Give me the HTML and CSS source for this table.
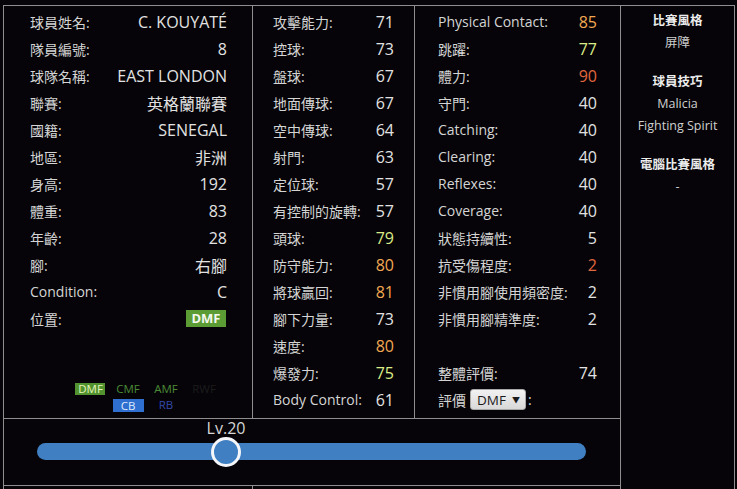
FILE: index.html
```html
<!DOCTYPE html>
<html lang="zh-Hant">
<head>
<meta charset="utf-8">
<link rel="stylesheet" href="styles.css">
</head>
<body>
<div class="sheet">
  <div class="cell info">
    <div class="row"><span class="k">球員姓名:</span><span class="v">C. KOUYATÉ</span></div>
    <div class="row"><span class="k">隊員編號:</span><span class="v">8</span></div>
    <div class="row"><span class="k">球隊名稱:</span><span class="v">EAST LONDON</span></div>
    <div class="row"><span class="k">聯賽:</span><span class="v">英格蘭聯賽</span></div>
    <div class="row"><span class="k">國籍:</span><span class="v">SENEGAL</span></div>
    <div class="row"><span class="k">地區:</span><span class="v">非洲</span></div>
    <div class="row"><span class="k">身高:</span><span class="v">192</span></div>
    <div class="row"><span class="k">體重:</span><span class="v">83</span></div>
    <div class="row"><span class="k">年齡:</span><span class="v">28</span></div>
    <div class="row"><span class="k">腳:</span><span class="v">右腳</span></div>
    <div class="row"><span class="k">Condition:</span><span class="v">C</span></div>
    <div class="row"><span class="k">位置:</span><span class="badge">DMF</span></div>
    <div class="pitch">
      <span class="pos on-green">DMF</span>
      <span class="pos green">CMF</span>
      <span class="pos green">AMF</span>
      <span class="pos faded">RWF</span>
      <span class="pos empty"></span>
      <span class="pos on-blue">CB</span>
      <span class="pos blue">RB</span>
    </div>
  </div>

  <div class="cell stats">
    <div class="row"><span class="k">攻擊能力:</span><span class="v">71</span></div>
    <div class="row"><span class="k">控球:</span><span class="v">73</span></div>
    <div class="row"><span class="k">盤球:</span><span class="v">67</span></div>
    <div class="row"><span class="k">地面傳球:</span><span class="v">67</span></div>
    <div class="row"><span class="k">空中傳球:</span><span class="v">64</span></div>
    <div class="row"><span class="k">射門:</span><span class="v">63</span></div>
    <div class="row"><span class="k">定位球:</span><span class="v">57</span></div>
    <div class="row"><span class="k">有控制的旋轉:</span><span class="v">57</span></div>
    <div class="row"><span class="k">頭球:</span><span class="v c-lime">79</span></div>
    <div class="row"><span class="k">防守能力:</span><span class="v c-orange">80</span></div>
    <div class="row"><span class="k">將球贏回:</span><span class="v c-orange">81</span></div>
    <div class="row"><span class="k">腳下力量:</span><span class="v">73</span></div>
    <div class="row"><span class="k">速度:</span><span class="v c-orange">80</span></div>
    <div class="row"><span class="k">爆發力:</span><span class="v c-lime">75</span></div>
    <div class="row"><span class="k">Body Control:</span><span class="v">61</span></div>
  </div>

  <div class="cell stats2">
    <div class="row"><span class="k">Physical Contact:</span><span class="v c-orange">85</span></div>
    <div class="row"><span class="k">跳躍:</span><span class="v c-lime">77</span></div>
    <div class="row"><span class="k">體力:</span><span class="v c-red">90</span></div>
    <div class="row"><span class="k">守門:</span><span class="v">40</span></div>
    <div class="row"><span class="k">Catching:</span><span class="v">40</span></div>
    <div class="row"><span class="k">Clearing:</span><span class="v">40</span></div>
    <div class="row"><span class="k">Reflexes:</span><span class="v">40</span></div>
    <div class="row"><span class="k">Coverage:</span><span class="v">40</span></div>
    <div class="row"><span class="k">狀態持續性:</span><span class="v">5</span></div>
    <div class="row"><span class="k">抗受傷程度:</span><span class="v c-red">2</span></div>
    <div class="row"><span class="k">非慣用腳使用頻密度:</span><span class="v">2</span></div>
    <div class="row"><span class="k">非慣用腳精準度:</span><span class="v">2</span></div>
    <div class="row spacer"></div>
    <div class="row"><span class="k">整體評價:</span><span class="v">74</span></div>
    <div class="row rating"><span class="k">評價</span><span class="select">DMF<span class="arrow">▼</span></span><span class="k">:</span></div>
  </div>

  <div class="cell side">
    <div class="group">
      <div class="title">比賽風格</div>
      <div class="item">屏障</div>
    </div>
    <div class="group">
      <div class="title">球員技巧</div>
      <div class="item">Malicia</div>
      <div class="item">Fighting Spirit</div>
    </div>
    <div class="group">
      <div class="title">電腦比賽風格</div>
      <div class="item">-</div>
    </div>
  </div>

  <div class="cell slider">
    <div class="lv">Lv.20</div>
    <div class="track">
      <span class="thumb"></span>
    </div>
  </div>

  <div class="cell foot1"></div>
  <div class="cell foot2"></div>
</div>
</body>
</html>
```

FILE: styles.css
```css
* { box-sizing: border-box; }

html, body {
  margin: 0;
  background: #060408;
  overflow: hidden;
}

body {
  padding: 5px 0 0 3px;
  font-family: "Open Sans", "Noto Sans CJK TC", sans-serif;
  font-size: 14px;
  color: #d6d6d6;
}

.sheet {
  display: grid;
  grid-template-columns: 249px 162px 206px 114px;
  grid-template-rows: 413px 67px 60px;
  border-left: 1px solid #8e8e8e;
  border-top: 1px solid #8e8e8e;
  width: 732px;
}

.cell {
  border-right: 1px solid #8e8e8e;
  border-bottom: 1px solid #8e8e8e;
}

.row {
  display: flex;
  justify-content: space-between;
  align-items: center;
  height: 27px;
  white-space: nowrap;
}

.k { color: #d4d4d4; }
.v { color: #e2e2e2; font-size: 16px; }

.c-orange { color: #f2a853; }
.c-lime { color: #dcec86; }
.c-red { color: #e2673f; }

.info { padding: 2px 25px 0 26px; }
.stats { padding: 2px 20px 0 20px; }
.stats2 { padding: 2px 23px 0 23px; }

.badge {
  background: #5c9c34;
  color: #f4f8ee;
  font-weight: 700;
  font-size: 13px;
  line-height: 17px;
  width: 40px;
  text-align: center;
  margin-right: 1px;
}

.pitch {
  display: grid;
  grid-template-columns: repeat(4, 38px);
  grid-auto-rows: 16px;
  justify-items: center;
  align-items: center;
  margin: 49px 0 0 41px;
  font-size: 11.5px;
  line-height: 12px;
}

.pos { display: block; text-align: center; }
.on-green { background: #53932f; color: #e4f6bc; width: 30px; padding: 0 0 0 1px; }
.green { color: #4a8a36; }
.faded { color: #1c1c1c; }
.on-blue { background: #2f6fd0; color: #dfe8fb; width: 31px; height: 13px; line-height: 13px; }
.blue { color: #3448a8; }

.spacer { height: 27px; }

.rating { justify-content: flex-start; }
.select {
  display: flex;
  align-items: center;
  justify-content: space-between;
  width: 56px;
  height: 21px;
  margin: 0 2px 0 4px;
  padding: 0 5px 0 6px;
  background: linear-gradient(#f2f2f2, #d8d8d8);
  border: 1px solid #a8a8a8;
  border-radius: 3px;
  color: #1a1a1a;
  font-size: 13.5px;
}
.arrow { font-size: 8px; }

.side {
  grid-column: 4;
  grid-row: 1 / 4;
  padding-top: 4px;
  text-align: center;
  font-size: 12.5px;
  line-height: 22px;
}
.group { margin-bottom: 17px; }
.title { font-weight: 700; color: #ececec; font-size: 12.5px; }
.item { color: #cfcfcf; }

.slider {
  grid-column: 1 / 4;
  grid-row: 2;
  padding: 0 0 0 33px;
}

.lv {
  width: 60px;
  margin-left: 159px;
  text-align: center;
  line-height: 18px;
  font-size: 16px;
  color: #d6d6d6;
}

.track {
  position: relative;
  width: 549px;
  height: 17px;
  margin-top: 6px;
  background: #3f7fc2;
  border-radius: 9px;
}

.thumb {
  position: absolute;
  left: 174px;
  top: -6px;
  width: 30px;
  height: 30px;
  border-radius: 50%;
  background: #3f7fc2;
  border: 3px solid #f4f6fa;
}

.foot1 { grid-column: 1; grid-row: 3; }
.foot2 { grid-column: 2 / 4; grid-row: 3; }
```
